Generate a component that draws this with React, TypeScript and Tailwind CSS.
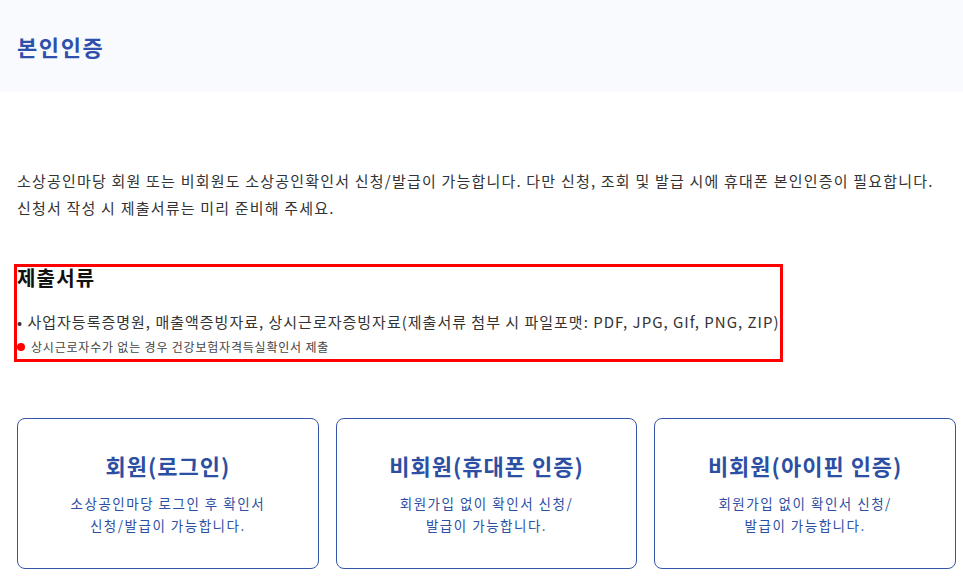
export default function App() {
  const cards = [
    { title: "회원(로그인)", lines: ["소상공인마당 로그인 후 확인서", "신청/발급이 가능합니다."] },
    { title: "비회원(휴대폰 인증)", lines: ["회원가입 없이 확인서 신청/", "발급이 가능합니다."] },
    { title: "비회원(아이핀 인증)", lines: ["회원가입 없이 확인서 신청/", "발급이 가능합니다."] },
  ];

  return (
    <div className="min-h-[576px] bg-white font-['Noto_Sans_CJK_KR',_'Noto_Sans',_sans-serif]">
      {/* Header */}
      <div className="h-[92px] bg-[#f8fafd] px-[17px] flex items-center">
        <h1 className="text-[22px] font-bold text-[#2f4fad] tracking-[1.6px]">본인인증</h1>
      </div>

      <div className="px-[17px]">
        {/* Intro */}
        <p className="mt-[75px] text-[15px] leading-[27px] text-[#333] tracking-[1.2px] whitespace-nowrap">
          소상공인마당 회원 또는 비회원도 소상공인확인서 신청/발급이 가능합니다. 다만 신청, 조회 및 발급 시에 휴대폰 본인인증이 필요합니다.
          <br />
          신청서 작성 시 제출서류는 미리 준비해 주세요.
        </p>

        {/* Documents */}
        <div className="mt-[43px] -ml-[3px] w-[769px] border-[3px] border-[#ff0000] pb-[2px]">
          <h2 className="text-[20px] font-bold leading-[22px] text-[#111] tracking-[1.2px]">제출서류</h2>
          <p className="mt-[21px] text-[15px] leading-[24px] text-[#333] tracking-[1px] whitespace-nowrap">
            • 사업자등록증명원, 매출액증빙자료, 상시근로자증빙자료(제출서류 첨부 시 파일포맷: PDF, JPG, GIf, PNG, ZIP)
          </p>
          <p className="mt-[3px] flex items-center text-[12px] leading-[20px] text-[#444] tracking-[0.8px]">
            <span className="inline-block w-[8px] h-[8px] rounded-full bg-[#ff0000] mr-[6px]"></span>
            상시근로자수가 없는 경우 건강보험자격득실확인서 제출
          </p>
        </div>

        {/* Cards */}
        <div className="mt-[56px] grid grid-cols-3 gap-[17px] w-[939px]">
          {cards.map((c) => (
            <div
              key={c.title}
              className="h-[151px] rounded-[8px] border border-[#3555a8] flex flex-col items-center pt-[31px] text-[#2c4fa3]"
            >
              <div className="text-[22px] font-semibold leading-[30px] tracking-[1px]">{c.title}</div>
              <div className="mt-[12px] text-[13.5px] leading-[22px] text-center tracking-[1.5px]">
                {c.lines.map((l) => (
                  <div key={l}>{l}</div>
                ))}
              </div>
            </div>
          ))}
        </div>
      </div>
    </div>
  );
}
